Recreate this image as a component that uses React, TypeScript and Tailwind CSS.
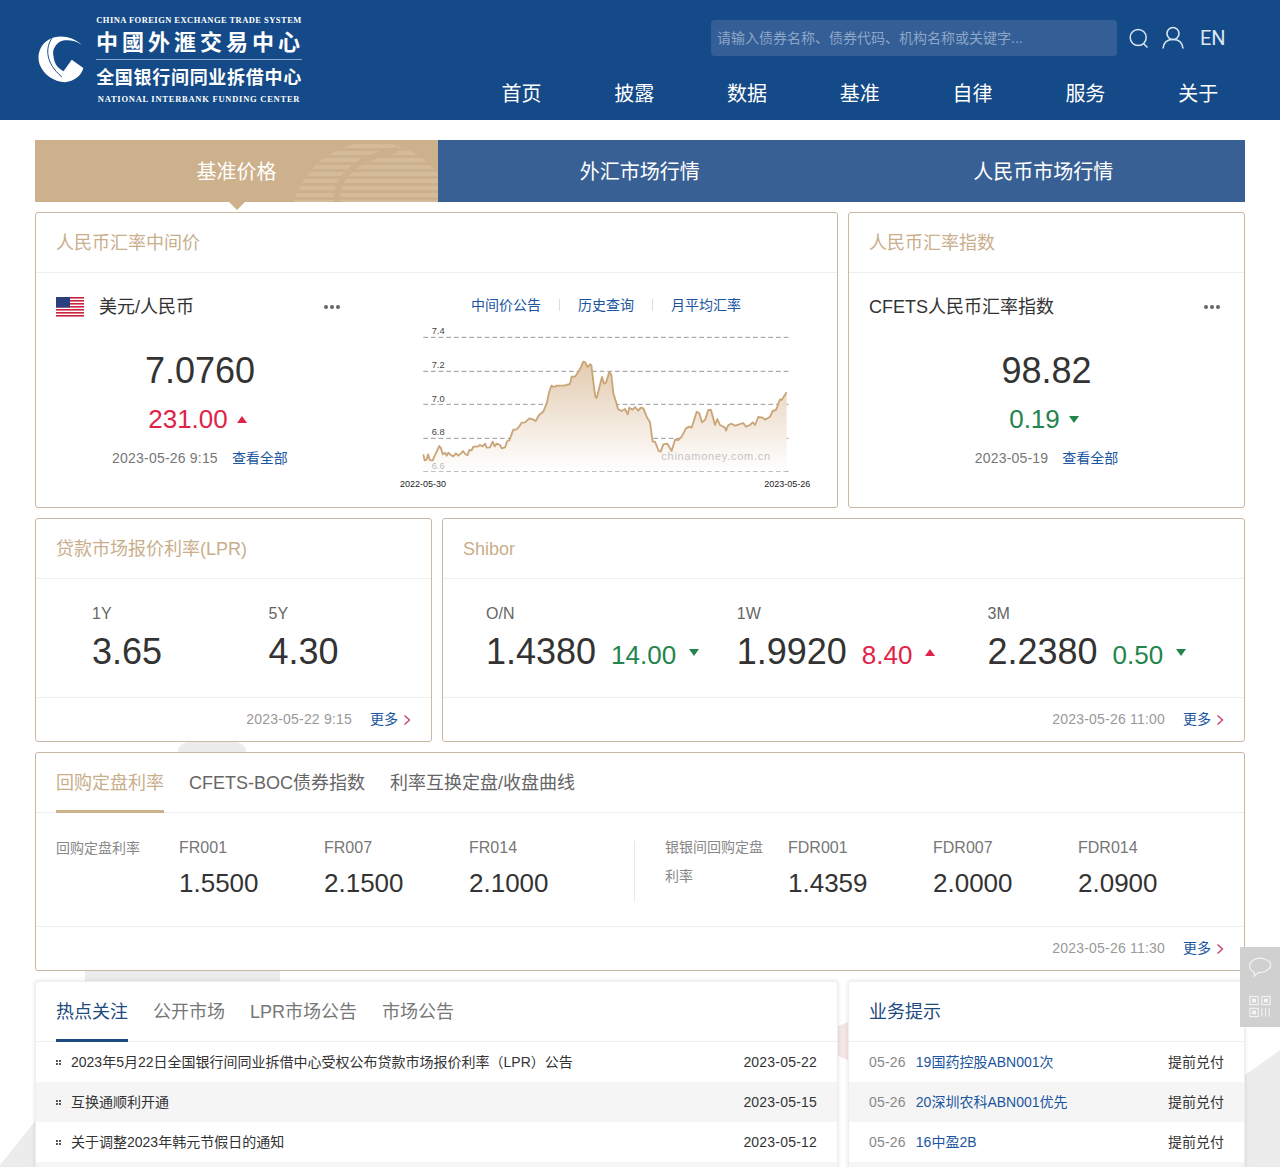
const chartLine =
  '100,508 104,526 110,524 114,508 120,526 128,526 136,508 148,483 153,490 158,508 165,503 170,512 175,503 182,510 190,514 198,505 205,512 213,505 219,498 226,507 232,511 238,495 245,496 250,485 262,485 270,480 278,484 285,476 290,488 300,487 308,470 314,484 320,476 330,480 335,490 345,487 352,468 358,466 370,434 378,434 385,428 395,413 405,412 418,400 430,404 437,408 447,390 460,380 470,355 478,320 484,302 492,306 500,302 520,302 530,300 540,297 545,275 555,275 565,260 572,248 580,230 586,232 592,246 600,238 604,240 610,290 616,335 620,339 626,315 636,276 642,296 648,293 658,260 664,270 670,325 678,350 684,372 695,378 705,372 713,388 718,368 728,374 735,366 745,377 752,368 760,370 770,395 780,412 788,470 795,470 806,498 812,500 820,478 832,476 845,498 855,464 865,465 875,455 888,430 897,425 905,428 920,380 928,385 936,412 945,405 955,375 963,375 975,420 982,402 990,420 1005,428 1008,437 1015,420 1025,416 1035,422 1045,419 1060,414 1068,425 1080,420 1088,412 1095,420 1105,396 1118,398 1125,404 1140,395 1148,378 1158,375 1170,343 1175,345 1190,322';

const navItems = ['首页', '披露', '数据', '基准', '自律', '服务', '关于'];

const news = [
  { title: '2023年5月22日全国银行间同业拆借中心受权公布贷款市场报价利率（LPR）公告', date: '2023-05-22' },
  { title: '互换通顺利开通', date: '2023-05-15' },
  { title: '关于调整2023年韩元节假日的通知', date: '2023-05-12' },
  { title: '', date: '' },
];

const tips = [
  { date: '05-26', name: '19国药控股ABN001次', type: '提前兑付' },
  { date: '05-26', name: '20深圳农科ABN001优先', type: '提前兑付' },
  { date: '05-26', name: '16中盈2B', type: '提前兑付' },
  { date: '', name: '', type: '' },
];

function Up() {
  return <span className="inline-block h-0 w-0 border-x-[5px] border-b-[7px] border-x-transparent border-b-[#df2349]" />;
}

function Down() {
  return <span className="inline-block h-0 w-0 border-x-[5px] border-t-[7px] border-x-transparent border-t-[#23844d]" />;
}

function Dots() {
  return (
    <div className="mr-1 flex gap-[2px]">
      <span className="h-1 w-1 rounded-full bg-[#666]" />
      <span className="h-1 w-1 rounded-full bg-[#666]" />
      <span className="h-1 w-1 rounded-full bg-[#666]" />
    </div>
  );
}

function Flag() {
  return (
    <svg width="28" height="20" viewBox="0 0 28 20">
      <rect width="28" height="20" fill="#fff" />
      {[0, 3, 6, 9, 12, 15, 18].map((y) => (
        <rect key={y} y={y} width="28" height="1.6" fill="#c9233f" />
      ))}
      <rect width="14" height="10.5" fill="#2b3f7e" />
    </svg>
  );
}

function CardHead({ title }: { title: string }) {
  return (
    <div className="flex h-[60px] items-center border-b border-[#eeeeee] pl-5 pt-[2px] text-[18px] text-[#c9ae8c]">{title}</div>
  );
}

function Footer({ time }: { time: string }) {
  return (
    <div className="flex h-[43px] items-center justify-end pr-5 text-[14px]">
      <span className="tracking-[0.2px] text-[#999]">{time}</span>
      <a className="ml-[18px] text-[#1a559f]">更多</a>
      <svg className="ml-[5px]" width="8" height="12" viewBox="0 0 8 12" fill="none" stroke="#c8446e" strokeWidth="1.4">
        <path d="M1.5 1.5 6.5 6l-5 4.5" />
      </svg>
    </div>
  );
}

function Chart() {
  return (
    <svg width="440" height="175" viewBox="0 120 1320 525" className="block">
      <defs>
        <linearGradient id="area" x1="0" y1="0" x2="0" y2="1">
          <stop offset="0" stopColor="#e3cbb0" />
          <stop offset="1" stopColor="#ffffff" />
        </linearGradient>
      </defs>
      {[157, 259, 358, 460, 559].map((y) => (
        <line key={y} x1="100" x2="1200" y1={y} y2={y} stroke="#999" strokeWidth="3" strokeDasharray="14 9" />
      ))}
      <polygon points={`100,559 ${chartLine} 1190,559`} fill="url(#area)" />
      <polyline points={chartLine} fill="none" stroke="#c9a578" strokeWidth="5.500" strokeLinejoin="round" />
      <g fontSize="28" fill="#444" fontFamily="Liberation Sans, sans-serif">
        <text x="125" y="148">7.4</text>
        <text x="125" y="250">7.2</text>
        <text x="125" y="351">7.0</text>
        <text x="125" y="451">6.8</text>
        <text x="125" y="553" fill="#bbb">6.6</text>
        <text x="30" y="605" fontSize="27" fill="#222">2022-05-30</text>
        <text x="1123" y="605" fontSize="27" fill="#222">2023-05-26</text>
      </g>
      <text x="814" y="525" fontSize="33" letterSpacing="2.2" fill="#c4c4c4" fontFamily="Liberation Sans, sans-serif">
        chinamoney.com.cn
      </text>
    </svg>
  );
}

function Quote({ label, value, change, dir }: { label: string; value: string; change: string; dir: 'up' | 'down' }) {
  return (
    <div className="w-[250.75px]">
      <div className="h-5 text-[16px] leading-5 text-[#666]">{label}</div>
      <div className="mt-[6px] flex h-[44px] items-center">
        <span className="text-[36px] leading-[44px] text-[#333]">{value}</span>
        <span className={`ml-[15px] mt-[6px] text-[26px] leading-[32px] ${dir === 'up' ? 'text-[#df2349]' : 'text-[#23844d]'}`}>
          {change}
        </span>
        <span className="ml-[13px] flex">{dir === 'up' ? <Up /> : <Down />}</span>
      </div>
    </div>
  );
}

function Fixing({ label, value }: { label: string; value: string }) {
  return (
    <div className="w-[145px] pt-[6px]">
      <div className="h-5 text-[16px] leading-5 text-[#777]">{label}</div>
      <div className="mt-[9px] h-8 text-[26px] leading-8 text-[#333]">{value}</div>
    </div>
  );
}

function Bullet() {
  return (
    <span className="grid h-[5px] w-[5px] grid-cols-2 gap-px">
      <i className="bg-[#555]" />
      <i className="bg-[#555]" />
      <i className="bg-[#555]" />
      <i className="bg-[#555]" />
    </span>
  );
}

export default function App() {
  return (
    <div className="relative h-[1167px] w-[1280px] overflow-hidden bg-white font-['Liberation_Sans','Noto_Sans_CJK_SC',sans-serif]">
      {/* faint building behind the cards */}
      <svg className="absolute left-0 top-[730px]" width="1280" height="437" viewBox="0 0 1280 437" fill="#ececec">
        <ellipse cx="212" cy="20" rx="34" ry="12" />
        <rect x="85" y="240" width="195" height="14" />
        <polygon points="0,435 40,385 40,437 0,437" />
        <polygon points="838,296 848,292 848,330 838,326" fill="#f3e6e6" />
        <polygon points="1245,345 1280,320 1280,437 1245,437" />
      </svg>

      <header className="relative flex h-[120px] bg-[#154a88] text-white">
        <div className="flex w-[465px] items-start pl-[37px]">
          <svg className="mt-[33px] shrink-0" width="48" height="50" viewBox="110 100 145 150">
            <path
              fill="#fff"
              d="M245 135C225 120 195 118 180 125 165 135 155 150 160 170 162 190 170 205 190 215L215 180 250 205C245 225 225 245 195 248 160 248 130 225 118 195 108 165 120 135 145 120 175 103 215 108 245 135Z"
            />
            <path fill="none" stroke="#154a88" strokeWidth="3" d="M155 115C135 145 135 190 185 232" />
          </svg>
          <div className="ml-[11px] w-[206px] whitespace-nowrap pt-[14px] text-center">
            <div className="h-[13px] font-['Liberation_Serif','Noto_Sans_CJK_SC',serif] text-[8.5px] font-bold leading-[13px] tracking-[0.45px]">
              CHINA FOREIGN EXCHANGE TRADE SYSTEM
            </div>
            <div className="h-[32px] text-[22px] font-bold leading-[32px] tracking-[4px]">中國外滙交易中心</div>
            <div className="h-px bg-[#8ea8cc]" />
            <div className="mt-[6px] h-6 text-[18px] font-bold leading-6 tracking-[0.7px]">全国银行间同业拆借中心</div>
            <div className="mt-[3px] h-[13px] font-['Liberation_Serif','Noto_Sans_CJK_SC',serif] text-[8.5px] font-bold leading-[13px] tracking-[0.75px]">
              NATIONAL INTERBANK FUNDING CENTER
            </div>
          </div>
        </div>
        <div className="w-[790px]">
          <div className="ml-[246px] mt-[20px] flex h-[36px] items-center">
            <input
              readOnly
              placeholder="请输入债券名称、债券代码、机构名称或关键字..."
              className="h-[36px] w-[406px] rounded-[4px] bg-[#335f96] px-[6px] text-[14px] outline-none placeholder:text-[#8ea6c7]"
            />
            <svg className="ml-3" width="20" height="20" viewBox="0 0 20 20" fill="none" stroke="#dbe6f3" strokeWidth="1.5">
              <circle cx="9.2" cy="9.500" r="8" />
              <path d="M14.500 15.500l4 4" />
            </svg>
            <svg className="ml-[13px] -translate-y-px" width="22" height="23" viewBox="0 0 22 23" fill="none" stroke="#dbe6f3" strokeWidth="1.6">
              <circle cx="11" cy="7.500" r="6" />
              <path d="M1 22.500C1.500 16.500 5.500 13.500 11 13.500s9.500 3 10 9" />
            </svg>
            <span className="ml-[16px] font-['Roboto',sans-serif] text-[20px] text-[#dbe6f3]">EN</span>
          </div>
          <nav className="mt-[23px] flex">
            {navItems.map((item) => (
              <a key={item} className="w-[112.8px] text-center text-[20px] leading-[30px]">
                {item}
              </a>
            ))}
          </nav>
        </div>
      </header>

      <main className="relative px-[35px] pt-5">
        <div className="flex h-[62px] text-[20px] text-white">
          <div className="relative flex w-[403px] items-center justify-center bg-[#cdb18c] pt-[2px]">
            <svg className="absolute left-[250px] top-0" width="153" height="62" viewBox="0 0 153 62" fill="#d4bb9a">
              <defs>
                <clipPath id="sun">
                  <circle cx="88" cy="84" r="82" />
                </clipPath>
              </defs>
              <g clipPath="url(#sun)">
                {[4, 11, 18, 25, 32, 39, 46, 53, 60].map((y) => (
                  <rect key={y} y={y} width="153" height="4" />
                ))}
                <path d="M52 62C50 36 72 18 112 10" fill="none" stroke="#cdb18c" strokeWidth="6" />
              </g>
            </svg>
            <span className="relative">基准价格</span>
            <span className="absolute -bottom-2 left-[194px] h-0 w-0 border-x-[8px] border-t-[8px] border-x-transparent border-t-[#cdb18c]" />
          </div>
          <div className="flex w-[403.5px] items-center justify-center bg-[#386094] pt-[2px]">外汇市场行情</div>
          <div className="flex flex-1 items-center justify-center bg-[#386094] pt-[2px]">人民币市场行情</div>
        </div>

        <div className="mt-[10px] flex gap-[10px]">
          <section className="h-[296px] w-[803px] rounded-[3px] border border-[#c9b8a3] bg-white">
            <CardHead title="人民币汇率中间价" />
            <div className="flex">
              <div className="w-[308px] pl-5 pt-6">
                <div className="flex h-5 items-center justify-between">
                  <div className="flex items-center">
                    <Flag />
                    <span className="ml-[15px] text-[18px] text-[#333]">美元/人民币</span>
                  </div>
                  <Dots />
                </div>
                <div className="mt-8 h-[44px] text-center text-[36px] leading-[44px] text-[#333]">7.0760</div>
                <div className="mt-[11px] flex h-[30px] items-center justify-center gap-[9px] pr-[5px] text-[26px] text-[#df2349]">
                  231.00
                  <Up />
                </div>
                <div className="mt-[14px] flex h-5 items-center justify-center gap-[14px] text-[14px]">
                  <span className="tracking-[0.2px] text-[#777]">2023-05-26 9:15</span>
                  <a className="text-[#1a559f]">查看全部</a>
                </div>
              </div>
              <div className="ml-[46px]">
                <div className="flex h-[52px] items-center pl-[81px] pt-[12px] text-[14px] text-[#1a559f]">
                  <a>中间价公告</a>
                  <span className="mx-[18px] h-3 w-px bg-[#ddd]" />
                  <a>历史查询</a>
                  <span className="mx-[18px] h-3 w-px bg-[#ddd]" />
                  <a>月平均汇率</a>
                </div>
                <Chart />
              </div>
            </div>
          </section>
          <section className="h-[296px] w-[397px] rounded-[3px] border border-[#c9b8a3] bg-white">
            <CardHead title="人民币汇率指数" />
            <div className="px-5 pt-6">
              <div className="flex h-5 items-center justify-between">
                <span className="text-[18px] text-[#333]">CFETS人民币汇率指数</span>
                <Dots />
              </div>
              <div className="mt-8 h-[44px] text-center text-[36px] leading-[44px] text-[#333]">98.82</div>
              <div className="mt-[11px] flex h-[30px] items-center justify-center gap-[9px] pr-[5px] text-[26px] text-[#23844d]">
                0.19
                <Down />
              </div>
              <div className="mt-[14px] flex h-5 items-center justify-center gap-[14px] text-[14px]">
                <span className="tracking-[0.2px] text-[#777]">2023-05-19</span>
                <a className="text-[#1a559f]">查看全部</a>
              </div>
            </div>
          </section>
        </div>

        <div className="mt-[10px] flex gap-[10px]">
          <section className="h-[224px] w-[397px] rounded-[3px] border border-[#c9b8a3] bg-white">
            <CardHead title="贷款市场报价利率(LPR)" />
            <div className="flex h-[119px] border-b border-[#eeeeee] pl-[56px] pt-[25px]">
              <div className="w-[176.500px]">
                <div className="h-5 text-[16px] leading-5 text-[#666]">1Y</div>
                <div className="mt-[6px] text-[36px] leading-[44px] text-[#333]">3.65</div>
              </div>
              <div>
                <div className="h-5 text-[16px] leading-5 text-[#666]">5Y</div>
                <div className="mt-[6px] text-[36px] leading-[44px] text-[#333]">4.30</div>
              </div>
            </div>
            <Footer time="2023-05-22 9:15" />
          </section>
          <section className="h-[224px] w-[803px] rounded-[3px] border border-[#c9b8a3] bg-white">
            <CardHead title="Shibor" />
            <div className="flex h-[119px] border-b border-[#eeeeee] pl-[43px] pt-[25px]">
              <Quote label="O/N" value="1.4380" change="14.00" dir="down" />
              <Quote label="1W" value="1.9920" change="8.40" dir="up" />
              <Quote label="3M" value="2.2380" change="0.50" dir="down" />
            </div>
            <Footer time="2023-05-26 11:00" />
          </section>
        </div>

        <section className="mt-[10px] h-[219px] rounded-[3px] border border-[#c9b8a3] bg-white">
          <div className="flex h-[60px] gap-[25px] border-b border-[#eeeeee] pl-5 text-[18px] leading-[61px] text-[#666]">
            <a className="h-[60px] border-b-[3px] border-[#cdb18c] text-[#c9ae8c]">回购定盘利率</a>
            <a>CFETS-BOC债券指数</a>
            <a>利率互换定盘/收盘曲线</a>
          </div>
          <div className="flex h-[114px] items-start border-b border-[#eeeeee] pl-5 pt-[19px]">
            <div className="mt-px w-[123px] text-[14px] leading-[30px] text-[#888]">回购定盘利率</div>
            <Fixing label="FR001" value="1.5500" />
            <Fixing label="FR007" value="2.1500" />
            <Fixing label="FR014" value="2.1000" />
            <span className="ml-5 mt-[9px] h-[61px] w-px bg-[#e8e8e8]" />
            <div className="ml-[30px] mt-px w-[123px] pr-[23px] text-[14px] leading-[29px] text-[#888]">银银间回购定盘利率</div>
            <Fixing label="FDR001" value="1.4359" />
            <Fixing label="FDR007" value="2.0000" />
            <Fixing label="FDR014" value="2.0900" />
          </div>
          <Footer time="2023-05-26 11:30" />
        </section>

        <div className="mt-[10px] flex gap-[10px]">
          <section className="w-[803px] rounded-[3px] border border-[#eeeeee] bg-white shadow-[0_0_4px_rgba(0,0,0,0.12)]">
            <div className="flex h-[60px] gap-[25px] border-b border-[#eeeeee] pl-5 text-[18px] leading-[61px] text-[#777]">
              <a className="h-[60px] border-b-[3px] border-[#1d4a80] text-[#1d4a80]">热点关注</a>
              <a>公开市场</a>
              <a>LPR市场公告</a>
              <a>市场公告</a>
            </div>
            {news.map((row, i) => (
              <div
                key={i}
                className={`flex h-10 items-center justify-between px-5 text-[14px] text-[#333] ${i % 2 === 1 ? 'bg-[#f5f5f5]' : ''}`}
              >
                <div className="flex items-center gap-[10px]">
                  <Bullet />
                  <span>{row.title}</span>
                </div>
                <span className="tracking-[0.2px]">{row.date}</span>
              </div>
            ))}
          </section>
          <section className="w-[397px] rounded-[3px] border border-[#eeeeee] bg-white shadow-[0_0_4px_rgba(0,0,0,0.12)]">
            <div className="flex h-[60px] items-center border-b border-[#eeeeee] pl-5 pt-[2px] text-[18px] text-[#1d4a80]">业务提示</div>
            {tips.map((row, i) => (
              <div
                key={i}
                className={`flex h-10 items-center justify-between px-5 text-[14px] ${i % 2 === 1 ? 'bg-[#f5f5f5]' : ''}`}
              >
                <div className="flex gap-[10px]">
                  <span className="tracking-[0.2px] text-[#888]">{row.date}</span>
                  <a className="text-[#1a559f]">{row.name}</a>
                </div>
                <span className="text-[#333]">{row.type}</span>
              </div>
            ))}
          </section>
        </div>
      </main>

      {/* floating side tools */}
      <aside className="absolute left-[1240px] top-[947px] flex h-20 w-10 flex-col items-center bg-[#d0d0d0]">
        <svg className="mt-[10px]" width="24" height="20" viewBox="0 0 24 20" fill="none" stroke="#f4f4f4" strokeWidth="1.2">
          <path d="M6 19C7 17 7 16 6 15 2 13 1 10 2 7 4 2 10 0.500 15 1.500 20 2.500 23.500 5.500 22.500 9 21 14 14 16 10 15.500 9 17 8 18 6 19Z" />
        </svg>
        <svg className="mt-[18px]" width="22" height="23" viewBox="0 0 24 24" fill="none" stroke="#f4f4f4" strokeWidth="1.2">
          <rect x="1" y="1" width="9" height="9" />
          <rect x="14" y="1" width="9" height="9" />
          <rect x="1" y="14" width="9" height="9" />
          <rect x="4" y="4" width="3" height="3" fill="#f4f4f4" />
          <rect x="17" y="4" width="3" height="3" fill="#f4f4f4" />
          <rect x="4" y="17" width="3" height="3" fill="#f4f4f4" />
          <path d="M14 14v9M18 14v9M22 14v9" />
        </svg>
      </aside>
    </div>
  );
}
